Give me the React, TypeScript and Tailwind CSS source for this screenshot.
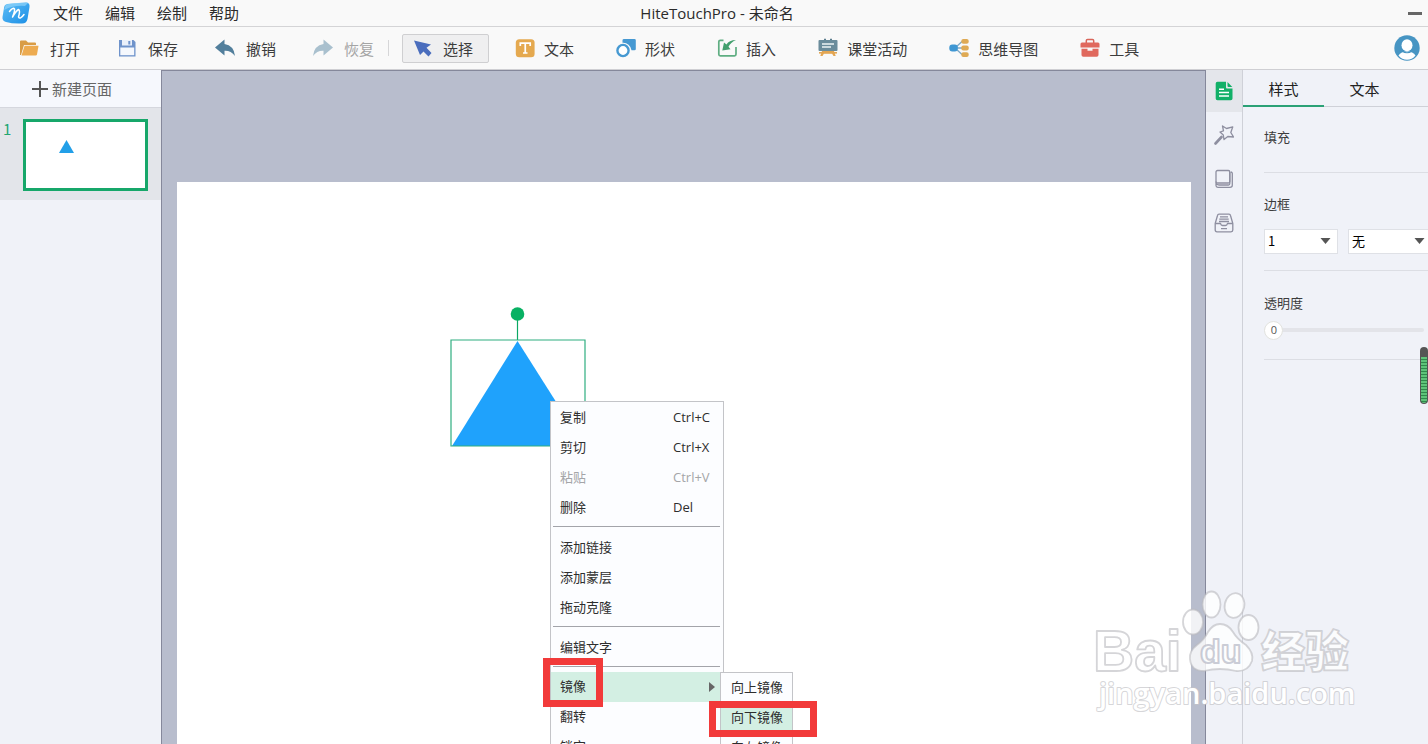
import { useState } from 'react';
import type { ReactNode } from 'react';
import clsx from 'clsx';

interface ToolItem {
  label: string;
  icon: ReactNode;
  disabled?: boolean;
}

interface MenuEntry {
  label: string;
  shortcut?: string;
  disabled?: boolean;
}

const menus = ['文件', '编辑', '绘制', '帮助'];

function AppLogo() {
  return (
    <svg viewBox="0 0 28 22" className="w-7 h-[22px]" aria-hidden="true">
      <defs>
        <linearGradient id="logo-fill" x1="0" y1="0" x2="1" y2="1">
          <stop offset="0" stopColor="#5cbcf5" />
          <stop offset="1" stopColor="#1c8fe6" />
        </linearGradient>
      </defs>
      <path d="M5 2Q14 1 24 .5Q28 .5 27.500 5L25.500 17Q24.500 21.500 20 21.500Q11 22 4 20Q0 19 .500 15L2 6Q2 3 5 2Z" fill="url(#logo-fill)" />
      <path d="M4 2.500Q14 0 26 1L23 4Q12 3 2 8Z" fill="#8fd3fa" opacity=".7" />
      <path d="M7.500 9.500Q11 5 12.500 7Q13 9 10.500 15Q14 9 16.500 7.500Q18.500 8 16.500 15Q18 18 22 12.500" fill="none" stroke="#fff" strokeWidth="1.500" strokeLinecap="round" strokeLinejoin="round" />
    </svg>
  );
}

function OpenIcon() {
  return (
    <svg viewBox="0 0 20 20" className="size-5">
      <path d="M1 17V3.500Q1 2.500 2 2.500H7L9 4.500H16Q17 4.500 17 5.500V7H5L2 17Z" fill="#d99c45" />
      <path d="M5.600 7.800H19.500L18 16.400Q17.800 17.500 16.600 17.500H2.500Z" fill="#edab50" />
    </svg>
  );
}

function SaveIcon() {
  return (
    <svg viewBox="0 0 20 20" className="size-5">
      <path d="M2 2H16.500L18.500 4V18.500H2Z" fill="#6f93cb" />
      <path d="M5 2H15V7.500H5Z" fill="#eaf0fa" />
      <path d="M11.300 3H13.300V6.500H11.300Z" fill="#6f93cb" />
      <path d="M3.300 9.500H17.200V17.200H3.300Z" fill="#f5f8fd" />
    </svg>
  );
}

function UndoIcon() {
  return (
    <svg viewBox="0 0 20 20" className="size-5">
      <path d="M0 9.500L9.500 1.500V6Q19 7.500 20 18Q16 12.500 9.500 12.800V17.500Z" fill="#527f9c" />
    </svg>
  );
}

function RedoIcon() {
  return (
    <svg viewBox="0 0 20 20" className="size-5">
      <path d="M20 9.500L10.500 1.500V6Q1 7.500 0 18Q4 12.500 10.500 12.800V17.500Z" fill="#a9c0ce" />
    </svg>
  );
}

function SelectIcon() {
  return (
    <svg viewBox="0 0 20 20" className="size-5">
      <path d="M0 2.500L17 6.500L12.500 9.800L17.500 15L14.500 18.500L9.500 13.500L6 17Z" fill="#4a6dbd" />
    </svg>
  );
}

function TextIcon() {
  return (
    <svg viewBox="0 0 20 20" className="size-5">
      <rect x=".8" y="1.200" width="18.800" height="18" rx="3.500" fill="#e5a94f" />
      <path d="M5.300 8V5.200H15.200V8M10.250 5.200V14.700M8 15H12.500" fill="none" stroke="#fff" strokeWidth="1.700" />
    </svg>
  );
}

function ShapeIcon() {
  return (
    <svg viewBox="0 0 20 20" className="size-5">
      <path d="M8 1H18.500Q19.800 1 19.800 2.300V11Q19.800 12.300 18.500 12.300H15.500A8.300 8.300 0 0 0 6.500 4.800V2.300Q6.500 1 8 1Z" fill="#4699d2" />
      <circle cx="7" cy="12.500" r="5.600" fill="#fff" stroke="#4699d2" strokeWidth="2.400" />
    </svg>
  );
}

function InsertIcon() {
  return (
    <svg viewBox="0 0 20 20" className="size-5">
      <path d="M6.500 2.300H3.300Q1.800 2.300 1.800 3.800V16.300Q1.800 17.800 3.300 17.800H17.500Q19 17.800 19 16.300V9" fill="none" stroke="#5fae82" strokeWidth="1.700" />
      <path d="M19 2Q12 2 9.500 6.500L7 4.500L5.300 12.500L13.500 11.200L11.500 8.800Q13.500 4.500 19 2Z" fill="#43a06e" />
    </svg>
  );
}

function ClassIcon() {
  return (
    <svg viewBox="0 0 20 20" className="size-5">
      <path d="M4 13L2.300 18H4.500L6 15.500H14L15.500 18H17.700L16 13Z" fill="#e3a653" />
      <path d="M1 14H19V15.600H1Z" fill="#e3a653" />
      <path d="M6 .8H8V3H12V.8H14V3H6Z" fill="#5b7e8e" />
      <rect x=".5" y="2" width="19" height="11" rx="1" fill="#6b8c9b" />
      <path d="M4 6H16M4 9H13" stroke="#eef3f5" strokeWidth="1.400" />
    </svg>
  );
}

function MindIcon() {
  return (
    <svg viewBox="0 0 20 20" className="size-5">
      <path d="M6 10L13 3.500M6 10H13M6 10L13 16.500" stroke="#7fa9c6" strokeWidth="1.300" />
      <rect x=".3" y="6.500" width="8.500" height="7" rx="3" fill="#3f97d3" />
      <rect x="12.300" y="1" width="7.400" height="4.800" rx="2" fill="#dfaa54" />
      <rect x="12.300" y="7.600" width="7.400" height="4.800" rx="2" fill="#dfaa54" />
      <rect x="12.300" y="14.200" width="7.400" height="4.800" rx="2" fill="#dfaa54" />
    </svg>
  );
}

function ToolboxIcon() {
  return (
    <svg viewBox="0 0 20 20" className="size-5">
      <path d="M6.300 5V2.800Q6.300 1.500 7.500 1.500H12.500Q13.700 1.500 13.700 2.800V5" fill="none" stroke="#d9655a" strokeWidth="1.500" />
      <path d="M2 4.500H18Q19.500 4.500 19.500 6V9.500H.5V6Q.5 4.500 2 4.500Z" fill="#e0695e" />
      <path d="M1.500 10.700H7.500V12.700H12.500V10.700H18.500V17Q18.500 18.800 16.700 18.800H3.300Q1.500 18.800 1.500 17Z" fill="#e0695e" />
    </svg>
  );
}

function AvatarIcon() {
  return (
    <svg viewBox="0 0 26 26" className="size-[26px]">
      <circle cx="13" cy="13" r="12.700" fill="#4795c3" />
      <ellipse cx="13" cy="10.300" rx="5.500" ry="6" fill="#fff" />
      <path d="M4.500 20.500Q7 16.600 13 16.600T21.500 20.500Q18 24.800 13 24.800T4.500 20.500Z" fill="#fff" />
      <path d="M8 16Q13 19.500 18 16" fill="none" stroke="#4795c3" strokeWidth="1.200" />
    </svg>
  );
}

function PageIcon() {
  return (
    <svg viewBox="0 0 20 20" className="size-5">
      <path d="M3.500 .8H12V6.500Q12 7.500 13 7.500H18.500V17.500Q18.500 19.300 16.700 19.300H3.500Q1.700 19.300 1.700 17.500V2.600Q1.700 .8 3.500 .8Z" fill="#12b068" />
      <path d="M13.500 1L18.300 6H14.500Q13.500 6 13.500 5Z" fill="#12b068" />
      <path d="M5 8.300H10M5 11.600H15M5 14.900H15" stroke="#fff" strokeWidth="1.500" />
    </svg>
  );
}

function WandIcon() {
  return (
    <svg viewBox="0 0 20 20" className="size-5" fill="none" stroke="#8e8fa0" strokeLinejoin="round">
      <path d="M8.500 1L12.500 3.500L18.800 1.800L16.800 7.500L19.500 12L13.800 11.500L10 14.500L9.300 10L6 7L9.500 5.800Z" strokeWidth="1.300" />
      <path d="M7.500 12L1.500 18.500" strokeWidth="2.600" strokeLinecap="round" />
    </svg>
  );
}

function LayersIcon() {
  return (
    <svg viewBox="0 0 20 20" className="size-5" fill="none" stroke="#8e8fa0" strokeWidth="1.300">
      <rect x="2" y="1.500" width="13.800" height="12.500" rx="1.500" />
      <path d="M2 12.500V16.500Q2 18.300 3.800 18.300H16Q18.300 18.300 18.300 16.300V4.500Q18.300 3 16.800 3M2 14Q3 16 5 16H14.500Q15.800 16 15.800 14.500V3" />
    </svg>
  );
}

function ArchiveIcon() {
  return (
    <svg viewBox="0 0 20 20" className="size-5" fill="none" stroke="#8e8fa0" strokeWidth="1.300" strokeLinejoin="round">
      <path d="M1.200 10.500L3.500 2.500Q3.800 1.200 5 1.200H15Q16.200 1.200 16.500 2.500L18.800 10.500V17Q18.800 18.800 17 18.800H3Q1.200 18.800 1.200 17Z" />
      <path d="M1.200 10.500H6.500Q7 12.500 8.500 12.500H11.500Q13 12.500 13.500 10.500H18.800M6 3.800H14M5.300 6.200H14.700M5 8.500H15M7 15.600H13" />
    </svg>
  );
}

const editTools: ToolItem[] = [
  { label: '打开', icon: <OpenIcon /> },
  { label: '保存', icon: <SaveIcon /> },
  { label: '撤销', icon: <UndoIcon /> },
  { label: '恢复', icon: <RedoIcon />, disabled: true },
];

const drawTools: ToolItem[] = [
  { label: '选择', icon: <SelectIcon /> },
  { label: '文本', icon: <TextIcon /> },
  { label: '形状', icon: <ShapeIcon /> },
  { label: '插入', icon: <InsertIcon /> },
  { label: '课堂活动', icon: <ClassIcon /> },
  { label: '思维导图', icon: <MindIcon /> },
  { label: '工具', icon: <ToolboxIcon /> },
];

const sideTabs = [
  { label: '属性', icon: <PageIcon /> },
  { label: '动画', icon: <WandIcon /> },
  { label: '图层', icon: <LayersIcon /> },
  { label: '资源', icon: <ArchiveIcon /> },
];

const menuGroups: MenuEntry[][] = [
  [
    { label: '复制', shortcut: 'Ctrl+C' },
    { label: '剪切', shortcut: 'Ctrl+X' },
    { label: '粘贴', shortcut: 'Ctrl+V', disabled: true },
    { label: '删除', shortcut: 'Del' },
  ],
  [{ label: '添加链接' }, { label: '添加蒙层' }, { label: '拖动克隆' }],
  [{ label: '编辑文字' }],
];

function ToolButton({ item, className, onClick }: { item: ToolItem; className: string; onClick?: () => void }) {
  return (
    <button
      onClick={onClick}
      disabled={item.disabled}
      className={clsx(
        'flex items-center h-[29px] border rounded-xs whitespace-nowrap',
        item.disabled ? 'text-[#a5a5a5]' : 'text-[#3c3c3c]',
        className
      )}
    >
      {item.icon}
      <span className="pt-0.5">{item.label}</span>
    </button>
  );
}

function ContextMenu() {
  return (
    <div className="absolute left-[373px] top-[219px] w-[174px] bg-[#fcfdff] border border-[#c3c4c8] text-[13px] text-[#2e2e2e]">
      {menuGroups.map((group, i) => (
        <div key={i}>
          {group.map((entry) => (
            <button
              key={entry.label}
              disabled={entry.disabled}
              className="flex items-center w-full h-[30px] pt-0.5 pl-[9px] text-left disabled:text-[#a4a5a8]"
            >
              <span className="w-[113px]">{entry.label}</span>
              <span>{entry.shortcut}</span>
            </button>
          ))}
          <hr className="mt-1 mb-[5px] ml-0.5 mr-[3px] border-[#a3a4aa]" />
        </div>
      ))}
      <div className="relative">
        <button className="flex items-center justify-between w-full h-[30px] pl-[9px] pr-2 bg-[#d3efe3] text-left">
          镜像
          <svg viewBox="0 0 6 10" className="w-1.5 h-[10px]" fill="#666">
            <path d="M0 0L6 5L0 10Z" />
          </svg>
        </button>
        <div className="absolute -left-2 -top-3.5 w-[60px] h-[49px] border-7 border-[#f23a3a]" />
        <div className="absolute left-[169px] top-0 w-[73px] bg-[#fcfdff] border border-[#c3c4c8]">
          <button className="block w-full h-[30px] pl-[10px] text-left">向上镜像</button>
          <div className="relative">
            <button className="block w-full h-[30px] pl-[10px] text-left bg-[#d3efe3]">向下镜像</button>
            <div className="absolute -left-3 -top-0.5 w-[108px] h-9 border-7 border-[#f23a3a]" />
          </div>
          <button className="block w-full h-[30px] pl-[10px] text-left">向左镜像</button>
        </div>
      </div>
      <button className="block w-full h-[30px] pl-[9px] text-left">翻转</button>
      <button className="block w-full h-[30px] pl-[9px] text-left">锁定</button>
    </div>
  );
}

function SelectBox({ label, options, className }: { label: string; options: string[]; className: string }) {
  return (
    <div className={clsx('relative shrink-0', className)}>
      <select
        aria-label={label}
        className="appearance-none w-full h-[25px] pl-[3px] pb-0.5 bg-white border border-[#dfe1e6] text-[13px] text-black font-['Noto_Sans_CJK_SC',sans-serif]"
      >
        {options.map((option) => (
          <option key={option}>{option}</option>
        ))}
      </select>
      <svg viewBox="0 0 10 6" className="absolute right-[7px] top-[9px] w-[11px] h-1.5 pointer-events-none" fill="#555">
        <path d="M0 0H10L5 6Z" />
      </svg>
    </div>
  );
}

function StylePanel() {
  const [tab, setTab] = useState('样式');
  const [opacity, setOpacity] = useState(0);

  return (
    <aside className="w-[185px] shrink-0 bg-[#f0f2f8] overflow-hidden">
      <div className="flex h-[37px] border-b border-[#cfd1d8] text-[15px] text-[#222]">
        {['样式', '文本'].map((name) => (
          <button
            key={name}
            onClick={() => setTab(name)}
            className={clsx('w-[81px] h-[37px] pt-1 border-b-2', tab === name ? 'border-[#2ba176]' : 'border-transparent')}
          >
            {name}
          </button>
        ))}
      </div>
      <div className="ml-[21px] text-[13px] leading-5 text-[#3c3c3c]">
        <section className="pt-5 h-[66px] border-b border-[#dcdee4]">
          <h2>填充</h2>
        </section>
        <section className="pt-[21px] h-[98px] border-b border-[#dcdee4]">
          <h2>边框</h2>
          <div className="flex gap-[10px] mt-[15px]">
            <SelectBox label="边框粗细" options={['1', '2', '3']} className="w-[74px]" />
            <SelectBox label="边框样式" options={['无', '实线', '虚线']} className="w-[84px]" />
          </div>
        </section>
        <section className="pt-[22px] h-[89px] border-b border-[#dcdee4]">
          <label htmlFor="opacity">透明度</label>
          <div className="relative flex items-center h-5 mt-[7px] mr-1">
            <input
              id="opacity"
              type="range"
              min={0}
              max={100}
              value={opacity}
              onChange={(e) => setOpacity(Number(e.target.value))}
              className="appearance-none w-full h-1 rounded-full bg-[#e3e4e9] [&::-webkit-slider-thumb]:appearance-none [&::-webkit-slider-thumb]:size-[19px] [&::-webkit-slider-thumb]:rounded-full [&::-webkit-slider-thumb]:bg-white [&::-webkit-slider-thumb]:border [&::-webkit-slider-thumb]:border-[#e2e3df]"
            />
            <output htmlFor="opacity" className="absolute left-0 w-5 text-center text-[11px] text-[#555] pointer-events-none">
              {opacity}
            </output>
          </div>
        </section>
      </div>
    </aside>
  );
}

function Watermark() {
  return (
    <svg viewBox="0 0 270 130" className="absolute right-[68px] bottom-6 w-[270px] h-[130px] pointer-events-none">
      <g
        fill="#fff"
        fillOpacity=".8"
        stroke="#b9b9be"
        strokeOpacity=".6"
        strokeWidth="1.800"
        strokeLinejoin="round"
        className="font-['Liberation_Sans','Noto_Sans_CJK_SC',sans-serif] font-bold"
      >
        <text x="3" y="81" fontSize="57">Bai</text>
        <ellipse cx="103" cy="32" rx="10" ry="12.500" />
        <ellipse cx="121.500" cy="14.500" rx="9" ry="13" />
        <ellipse cx="144.500" cy="15.500" rx="9.800" ry="12.500" transform="rotate(12 144.500 15.500)" />
        <ellipse cx="158.500" cy="37.500" rx="10" ry="12.500" />
        <path d="M130 34Q138 34 143 42Q147 49 156 55Q164 63 162 71Q158 82 146 81Q138 79 130 79T114 81Q101 81 100 69Q99 61 107 55Q114 50 118 42Q123 34 130 34Z" />
        <text x="110" y="73" fontSize="34" strokeWidth="2" stroke="#a9acbc">du</text>
        <text x="171" y="78" fontSize="44" className="font-black">经验</text>
      </g>
      <text
        x="9"
        y="114"
        fontSize="29"
        fill="#fff"
        stroke="#c4c4c8"
        strokeOpacity=".7"
        strokeWidth="2"
        strokeLinejoin="round"
        className="font-['Open_Sans',sans-serif] font-semibold [paint-order:stroke]"
      >
        jingyan.baidu.com
      </text>
    </svg>
  );
}

export default function App() {
  const [activeTool, setActiveTool] = useState('选择');
  const [sideTab, setSideTab] = useState('属性');

  return (
    <div className="relative flex flex-col h-screen overflow-hidden bg-[#f9f9f9] text-[15px] text-[#2b2b2b] font-['Open_Sans','Noto_Sans_CJK_SC',sans-serif]">
      <header className="relative flex items-center shrink-0 h-[27px] pl-0.5 border-b border-[#d4d4d6]">
        <AppLogo />
        <nav className="flex gap-[22px] ml-[23px]">
          {menus.map((name) => (
            <button key={name}>{name}</button>
          ))}
        </nav>
        <h1 className="absolute inset-x-0 mx-auto w-fit pl-1.5">HiteTouchPro - 未命名</h1>
        <button aria-label="最小化" className="ml-auto mr-1.5 w-3.5 h-[3px] bg-[#666]" />
      </header>

      <div className="flex items-center shrink-0 h-[43px] pl-1.5 border-b border-[#cfcfd3]">
        <div className="flex gap-[11px]">
          {editTools.map((item) => (
            <ToolButton key={item.label} item={item} className="gap-[11px] px-3 border-transparent" />
          ))}
        </div>
        <div className="w-px h-4 ml-px mr-[13px] bg-[#d6d6d8]" />
        <div className="flex gap-[14px]">
          {drawTools.map((item) => (
            <ToolButton
              key={item.label}
              item={item}
              className={clsx(
                'gap-[9px] pl-[11px] pr-[15px]',
                activeTool === item.label ? 'bg-[#efeff0] border-[#cfcfd1]' : 'border-transparent'
              )}
              onClick={() => setActiveTool(item.label)}
            />
          ))}
        </div>
        <button aria-label="用户" className="ml-auto mr-2">
          <AvatarIcon />
        </button>
      </div>

      <div className="flex flex-1 min-h-0">
        <aside className="w-[162px] shrink-0 bg-[#f0f2f8] border-r border-[#85889b]">
          <button className="flex items-center gap-1 w-full h-[38px] pl-8 bg-[#f6f8fd] border-b border-[#d5d7de] text-[#666]">
            <svg viewBox="0 0 16 16" className="size-4" stroke="#555" strokeWidth="2">
              <path d="M8 0V16M0 8H16" />
            </svg>
            <span className="pt-0.5">新建页面</span>
          </button>
          <div className="flex h-[92px] pt-[11px] pl-[3px] bg-[#e3e5ea]">
            <span className="w-5 text-[#22a672] leading-5 font-['Noto_Sans_CJK_SC',sans-serif]">1</span>
            <button aria-label="第1页" className="w-[125px] h-[72px] bg-white border-3 border-[#17a76a]">
              <svg viewBox="0 0 119 66" className="w-full h-full">
                <path d="M40.500 18L48 31H33Z" fill="#229fe8" />
              </svg>
            </button>
          </div>
        </aside>

        <main className="flex flex-1 min-w-0 pt-[111px] pl-[15px] pr-[14px] bg-[#b8bdcd] border-t border-[#85889b]">
          <div className="relative flex-1 bg-white">
            <svg viewBox="0 0 136 142" className="absolute left-[273px] top-[124px] w-[136px] h-[142px]">
              <path d="M67.500 8V34" stroke="#0ba864" strokeWidth="1.200" />
              <circle cx="67.500" cy="8" r="6.800" fill="#08b163" />
              <path d="M67.500 35L134 140H2Z" fill="#1fa2fc" />
              <path d="M1 34H135V140H1Z" fill="none" stroke="#2fae80" strokeWidth="1.200" />
            </svg>
            <ContextMenu />
          </div>
        </main>

        <div className="flex flex-col w-[38px] shrink-0 gap-0.5 bg-[#f0f2f8] border-l border-r border-l-[#85889b] border-r-[#cfd1d8]">
          {sideTabs.map((item) => (
            <button
              key={item.label}
              aria-label={item.label}
              onClick={() => setSideTab(item.label)}
              className={clsx('flex items-center justify-center h-[42px]', sideTab === item.label && 'bg-[#e4e6eb]')}
            >
              {item.icon}
            </button>
          ))}
        </div>

        <StylePanel />
      </div>

      <div className="absolute right-0 top-[347px] w-2 h-[57px] p-px pt-[10px] rounded-full bg-[#555]">
        <div className="h-full rounded-b-full bg-[repeating-linear-gradient(#5fc47a_0_2px,#2f8a4b_2px_3px)]" />
      </div>
      <Watermark />
    </div>
  );
}
